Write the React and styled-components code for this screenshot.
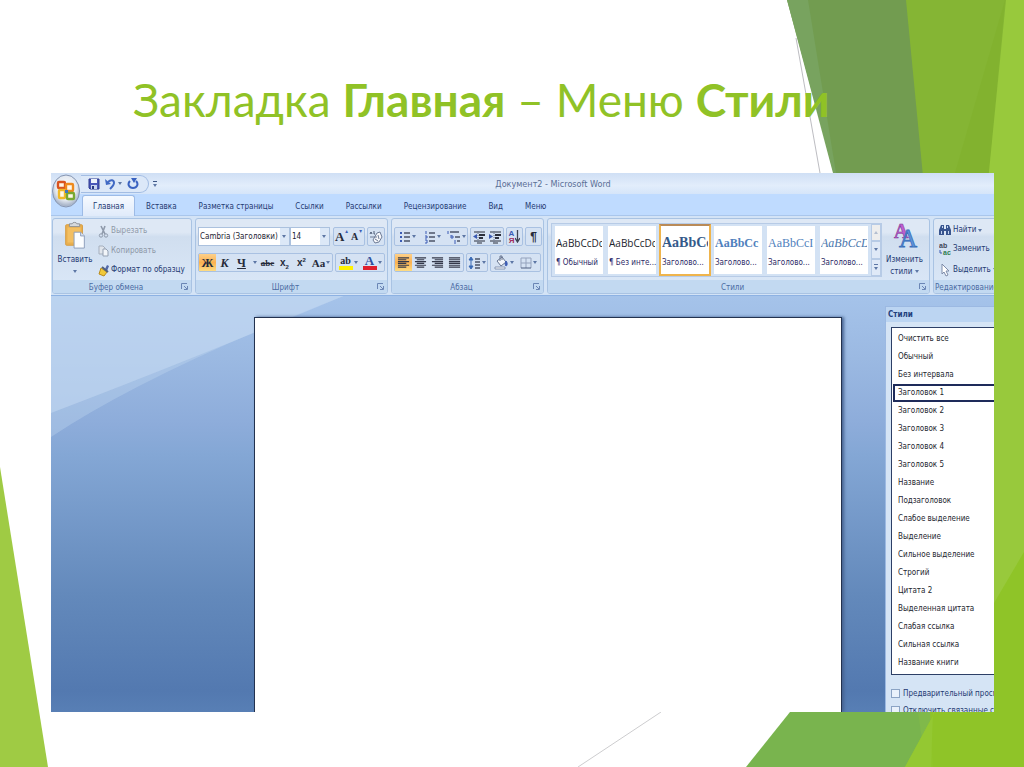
import React from 'react'
import styled, { createGlobalStyle, css } from 'styled-components';

const GlobalStyle = createGlobalStyle`
    *, *::before, *::after {
        box-sizing:border-box;
    }
    body {
        margin:0;
        background:white;
    }
    button, select, input {
        font:inherit;
        color:inherit;
    }
`;

const tabs = ['Главная', 'Вставка', 'Разметка страницы', 'Ссылки', 'Рассылки', 'Рецензирование', 'Вид', 'Меню'];

const gallery = [
    { sample: 'AaBbCcDc', name: '¶ Обычный', look: 'plain' },
    { sample: 'AaBbCcDc', name: '¶ Без инте...', look: 'plain' },
    { sample: 'AaBbCc', name: 'Заголово...', look: 'h1', active: true },
    { sample: 'AaBbCc', name: 'Заголово...', look: 'h2' },
    { sample: 'AaBbCcI', name: 'Заголово...', look: 'h3' },
    { sample: 'AaBbCcD', name: 'Заголово...', look: 'h4' },
];

const styleNames = [
    'Очистить все', 'Обычный', 'Без интервала', 'Заголовок 1', 'Заголовок 2', 'Заголовок 3',
    'Заголовок 4', 'Заголовок 5', 'Название', 'Подзаголовок', 'Слабое выделение', 'Выделение',
    'Сильное выделение', 'Строгий', 'Цитата 2', 'Выделенная цитата', 'Слабая ссылка',
    'Сильная ссылка', 'Название книги',
];

/* ---------- icons ---------- */

const Caret = () => (
    <CaretSvg width="4" height="3" viewBox="0 0 4 3"><path d="M0 0h4L2 3z" fill="#5d77a5" /></CaretSvg>
)

const Icon = ({ w = 14, h = 14, box, children }) => (
    <svg width={w} height={h} viewBox={box || `0 0 ${w} ${h}`} fill="none" aria-hidden="true">{children}</svg>
)

const SaveIcon = () => (
    <Icon w={12} h={12}>
        <path d="M1 1h10v10H2L1 10z" fill="#4a56b8" stroke="#2f3b90" />
        <path d="M3 1h6v4H3z" fill="#eef2fb" />
        <path d="M3 7h6v4H3z" fill="#c9d3ee" />
        <path d="M4 8h2v3H4z" fill="#27367f" />
    </Icon>
)

const UndoIcon = () => (
    <Icon w={11} h={12}>
        <path d="M3 4c3-3 6-2 6 1 0 2-2 4-4 6" stroke="#4069c4" strokeWidth="2" />
        <path d="M0 1l1 6 5-1z" fill="#4069c4" />
    </Icon>
)

const RedoIcon = () => (
    <Icon w={12} h={12}>
        <path d="M3 3C0 6 2 10 6 10s6-4 3-7" stroke="#3a62c0" strokeWidth="2" />
        <path d="M4 0h6L7 5z" fill="#3a62c0" />
    </Icon>
)

const OrbIcon = () => (
    <svg width="30" height="34" viewBox="0 0 30 34" aria-hidden="true">
        <defs>
            <radialGradient id="orb" cx="50%" cy="40%" r="65%">
                <stop offset="0" stopColor="#ffffff" />
                <stop offset="0.6" stopColor="#e3e8f0" />
                <stop offset="0.85" stopColor="#a9b5c9" />
                <stop offset="1" stopColor="#eef3fa" />
            </radialGradient>
        </defs>
        <ellipse cx="15" cy="17" rx="13.500" ry="16" fill="url(#orb)" stroke="#8595b2" />
        <g fill="#fff8e8" strokeWidth="2.400">
            <rect x="7" y="8" width="7" height="6" rx="1" stroke="#d9531e" />
            <rect x="15" y="10" width="7" height="7" rx="1" stroke="#ee8a1d" />
            <rect x="8" y="16" width="6" height="8" rx="1" stroke="#f0b92a" />
            <rect x="16" y="19" width="7" height="6" rx="1" stroke="#79a832" />
            <path d="M14 16h3v3h-3z" fill="#3f78c4" />
        </g>
    </svg>
)

const PasteIcon = () => (
    <Icon w={24} h={28} box="0 0 24 30">
        <rect x="2" y="4" width="18" height="22" rx="1" fill="#eab04f" stroke="#d59a3e" />
        <path d="M4 7h14v16H4z" fill="#f3bf62" />
        <path d="M6 6V3h3c0-2 5-2 5 0h3v3z" fill="#d5d9de" stroke="#8a8f98" />
        <path d="M11 12h7l4 4v13H11z" fill="#fbfdff" stroke="#8a9cba" />
        <path d="M18 12v4h4" stroke="#8a9cba" fill="#dbe5f4" />
    </Icon>
)

const CutIcon = () => (
    <Icon w={11} h={13}>
        <path d="M3 1l4 8M7 1L4 9" stroke="#8f9aab" strokeWidth="1.600" />
        <circle cx="3" cy="10.500" r="1.700" stroke="#8f9aab" />
        <circle cx="8" cy="10.500" r="1.700" stroke="#8f9aab" />
    </Icon>
)

const CopyIcon = () => (
    <Icon w={11} h={12}>
        <path d="M1 1h4l2 2v6H1z" fill="#e0e5ec" stroke="#a5afbd" />
        <path d="M5 4h3l2 2v5H5z" fill="#f2f5f9" stroke="#95a1b3" />
    </Icon>
)

const BrushIcon = () => (
    <Icon w={11} h={13}>
        <path d="M7 5l2-4 2 1-2 5z" fill="#5268a8" />
        <path d="M3 4l6 4-3 4-5-2z" fill="#f0c93a" stroke="#b98a1b" />
        <path d="M4 3l6 5" stroke="#52617e" strokeWidth="2" />
    </Icon>
)

const EraserIcon = () => (
    <Icon>
        <path d="M1 4l1-2 1 2M5 1v3h1" stroke="#4c5a75" />
        <path d="M8 3l3-1 2 5-3 5-4 1-2-3z" fill="#f6f7fb" stroke="#6d7b95" />
        <path d="M1 7h7M9 5l1 4M6 9l3 2" stroke="#6d7b95" />
    </Icon>
)

const BulletsIcon = () => (
    <Icon w={12}>
        <path d="M1 3h2M1 7h2M1 11h2" stroke="#3b5bb4" strokeWidth="2" />
        <path d="M5 3h6M5 7h6M5 11h6" stroke="#4c5468" strokeWidth="1.300" />
    </Icon>
)

const NumbersIcon = () => (
    <Icon w={12}>
        <path d="M2 1v3M1 6h2v2H1M1 10h2v3H1" stroke="#3b5bb4" />
        <path d="M5 3h6M5 7h6M5 11h6" stroke="#4c5468" strokeWidth="1.300" />
    </Icon>
)

const LevelsIcon = () => (
    <Icon>
        <path d="M1 1v3M4 5v3h2V6H4M8 10v4" stroke="#3b5bb4" />
        <path d="M3 2h9M8 7h5M10 11h3" stroke="#4c5468" strokeWidth="1.300" />
    </Icon>
)

const IndentIcon = ({ out }) => (
    <Icon>
        <path d="M2 2h11M2 11h11M5 13h5" stroke="#2c303d" />
        <path d="M7 5h6M7 8h4" stroke="#2c303d" strokeWidth="2" />
        {out ? <path d="M5 4v5L1 6.500z" fill="#3b5bb4" /> : <path d="M1 4v5l4-2.500z" fill="#3b5bb4" />}
        <path d="M6 1v12" stroke="#6b768f" strokeDasharray="1 1" />
    </Icon>
)

const SortArrow = () => (
    <Icon w={5} h={13}><path d="M2.500 0v11M0 8l2.500 4L5 8" stroke="#3d4353" strokeWidth="1.300" /></Icon>
)

const alignRows = {
    left: 'M1 2h12M1 4h9M1 6h12M1 8h9M1 10h12M1 12h9',
    center: 'M1 2h12M3 4h8M1 6h12M3 8h8M1 10h12M3 12h8',
    right: 'M1 2h12M4 4h9M1 6h12M4 8h9M1 10h12M4 12h9',
    justify: 'M1 2h12M1 4h12M1 6h12M1 8h12M1 10h12M1 12h12',
};

const AlignIcon = ({ side }) => (
    <Icon w={13} h={13} box="0 0 14 14"><path d={alignRows[side]} stroke="#34384a" strokeWidth="1.200" /></Icon>
)

const SpacingIcon = () => (
    <Icon w={13}>
        <path d="M3 3v8M1 4l2-3 2 3zM1 10l2 3 2-3z" stroke="#3b6bb4" fill="#3b6bb4" />
        <path d="M7 3h5M7 6h5M7 9h5M7 12h5" stroke="#4c5468" strokeWidth="1.300" />
    </Icon>
)

const BucketIcon = () => (
    <Icon w={15} h={15}>
        <path d="M3 6l5-4 4 5-5 4z" fill="#f3f6fb" stroke="#66748f" />
        <path d="M6 6V1h2v4" stroke="#66748f" />
        <path d="M12 6c2 2 1 5 0 5s-1-3 0-5z" fill="#3b5bb4" stroke="#3b5bb4" />
        <path d="M1 12h10v2H1z" fill="#ffffff" stroke="#8595b2" />
    </Icon>
)

const BordersIcon = () => (
    <Icon w={12} h={12}>
        <path d="M1 1h10v10M1 1v10M6 1v10M1 6h10" stroke="#95a3bd" />
        <path d="M1 11h10" stroke="#4f5f80" />
    </Icon>
)

const FindIcon = () => (
    <Icon w={12} h={12}>
        <path d="M0 11V6l2-5h3v10zM7 11V1h3l2 5v5z" fill="#39558f" />
        <path d="M5 5h2v2H5z" fill="#39558f" />
        <path d="M2 7h1v3H2zM9 7h1v3H9zM3 2h1v2H3zM8 2h1v2H8z" fill="#c4d5f0" />
    </Icon>
)

const PointerIcon = () => (
    <Icon w={12} h={14}>
        <path d="M3 1v10l2-2 2 4 2-1-2-4h3z" fill="#ffffff" stroke="#7d8ba8" />
    </Icon>
)

const ReplaceIcon = () => (
    <svg width="12" height="14" viewBox="0 0 12 14" aria-hidden="true">
        <text x="0" y="6" fontSize="7" fontWeight="700" fontFamily="Liberation Sans, sans-serif" fill="#3f4658">ab</text>
        <text x="4" y="13" fontSize="7" fontWeight="700" fontFamily="Liberation Sans, sans-serif" fill="#2e7d4f">ac</text>
        <path d="M1 8v3h2" fill="none" stroke="#3b5bb4" />
    </svg>
)

const BigStylesIcon = () => (
    <svg width="26" height="28" viewBox="0 0 26 28" aria-hidden="true">
        <text x="2" y="17" fontSize="20" fontWeight="700" fontFamily="Liberation Serif, serif" fill="#c05fd0" stroke="#7a3391" strokeWidth="0.500">A</text>
        <text x="7" y="26" fontSize="25" fontFamily="Liberation Serif, serif" fill="#5f95dc" stroke="#3b6fba" strokeWidth="0.800">A</text>
    </svg>
)

const Launcher = () => (
    <Launch aria-label="Параметры">
        <Icon w={7} h={7}><path d="M.5 6V.5H6M3 3l3 3M6.500 3v3.500H3" stroke="#6b86b5" /></Icon>
    </Launch>
)

const Backdrop = () => (
    <BackdropSvg viewBox="0 0 1024 767" preserveAspectRatio="none" aria-hidden="true">
        <path d="M796 38L820 173" stroke="#bdbdc2" />
        <path d="M661 712L578 767" stroke="#cdcdcf" />
        <path d="M787 0H1024V767H800L940 560z" fill="#729c50" />
        <path d="M787 0H808L836 173H833z" fill="#78a35f" />
        <path d="M906 0H1024V767H980z" fill="#85b534" />
        <path d="M1005 0L955 173L989 173z" fill="#82b22f" />
        <path d="M1006 0H1024V767H930z" fill="#98c93c" />
        <path d="M790 712L746 767H906L935 712z" fill="#79b44e" />
        <path d="M918 712L922 740L906 767H935V712z" fill="#80b94a" />
        <path d="M935 712L905 767H1024V700z" fill="#91c62c" />
        <path d="M1024 552L930 712L933 767H1024z" fill="#8fc428" />
        <path d="M935 712L905 767H931L933 712z" fill="#94c832" />
        <path d="M0 467V767H48z" fill="#9fcb44" />
    </BackdropSvg>
)

/* ---------- ribbon groups ---------- */

const ClipboardGroup = () => (
    <Group $width={140}>
        <GroupBody>
            <BigButton $width={40}>
                <PasteIcon />
                Вставить
                <Caret />
            </BigButton>
            <Stack>
                <Command disabled><CutIcon />Вырезать</Command>
                <Command disabled><CopyIcon />Копировать</Command>
                <Command><BrushIcon />Формат по образцу</Command>
            </Stack>
        </GroupBody>
        <GroupLabel>Буфер обмена<Launcher /></GroupLabel>
    </Group>
)

const FontGroup = () => (
    <Group $width={193}>
        <ToolRows>
            <Tools>
                <Combo $width={92}>
                    <select aria-label="Шрифт"><option>Cambria (Заголовки)</option></select>
                    <Caret />
                </Combo>
                <Combo $width={40}>
                    <select aria-label="Размер шрифта"><option>14</option></select>
                    <Caret />
                </Combo>
                <ToolSet $push>
                    <Tool $w={15} aria-label="Увеличить размер"><Letter $size={13}>A</Letter><sup>▴</sup></Tool>
                    <Tool $w={15} aria-label="Уменьшить размер"><Letter $size={10}>A</Letter><sup>▾</sup></Tool>
                </ToolSet>
                <ToolSet><Tool $w={16} aria-label="Очистить формат"><EraserIcon /></Tool></ToolSet>
            </Tools>
            <Tools>
                <ToolSet>
                    <Tool $w={17} $on><Letter>Ж</Letter></Tool>
                    <Tool $w={17}><Letter $italic>К</Letter></Tool>
                    <Tool $w={17}><Letter $line="underline">Ч</Letter></Tool>
                    <Tool $w={9} aria-label="Вид подчёркивания"><Caret /></Tool>
                    <Tool $w={17}><Letter $size={9} $line="line-through">abc</Letter></Tool>
                    <Tool $w={17}><Letter $size={10} $sans>x<sub>2</sub></Letter></Tool>
                    <Tool $w={17}><Letter $size={10} $sans>x<sup>2</sup></Letter></Tool>
                    <Tool $w={22}><Letter $size={11}>Aa</Letter><Caret /></Tool>
                </ToolSet>
                <ToolSet $push>
                    <Tool $w={24} aria-label="Цвет выделения"><Marked $bar="#fff200">ab</Marked><Caret /></Tool>
                    <Tool $w={24} aria-label="Цвет текста"><Marked $bar="#e0202c" $big>A</Marked><Caret /></Tool>
                </ToolSet>
            </Tools>
        </ToolRows>
        <GroupLabel>Шрифт<Launcher /></GroupLabel>
    </Group>
)

const ParagraphGroup = () => (
    <Group $width={153}>
        <ToolRows>
            <Tools>
                <ToolSet>
                    <Tool $w={25} aria-label="Маркеры"><BulletsIcon /><Caret /></Tool>
                    <Tool $w={25} aria-label="Нумерация"><NumbersIcon /><Caret /></Tool>
                    <Tool $w={22} aria-label="Многоуровневый список"><LevelsIcon /><Caret /></Tool>
                </ToolSet>
                <ToolSet>
                    <Tool $w={16} aria-label="Уменьшить отступ"><IndentIcon out /></Tool>
                    <Tool $w={16} aria-label="Увеличить отступ"><IndentIcon /></Tool>
                </ToolSet>
                <ToolSet>
                    <Tool $w={15} aria-label="Сортировка">
                        <SortLetters><span>А</span><span>Я</span></SortLetters><SortArrow />
                    </Tool>
                </ToolSet>
                <ToolSet $push><Tool $w={15} aria-label="Знаки"><Letter $size={12} $sans>¶</Letter></Tool></ToolSet>
            </Tools>
            <Tools>
                <ToolSet>
                    <Tool $w={17} $on aria-label="По левому краю"><AlignIcon side="left" /></Tool>
                    <Tool $w={17} aria-label="По центру"><AlignIcon side="center" /></Tool>
                    <Tool $w={17} aria-label="По правому краю"><AlignIcon side="right" /></Tool>
                    <Tool $w={17} aria-label="По ширине"><AlignIcon side="justify" /></Tool>
                </ToolSet>
                <ToolSet><Tool $w={20} aria-label="Интервал"><SpacingIcon /><Caret /></Tool></ToolSet>
                <ToolSet $push>
                    <Tool $w={25} aria-label="Заливка"><BucketIcon /><Caret /></Tool>
                    <Tool $w={24} aria-label="Границы"><BordersIcon /><Caret /></Tool>
                </ToolSet>
            </Tools>
        </ToolRows>
        <GroupLabel>Абзац<Launcher /></GroupLabel>
    </Group>
)

const StylesGroup = () => (
    <Group $width={383}>
        <GroupBody>
            <Gallery>
                {gallery.map((item, i) => (
                    <StyleCard key={i} $active={item.active}>
                        <Sample $look={item.look}>{item.sample}</Sample>
                        <CardName>{item.name}</CardName>
                    </StyleCard>
                ))}
                <GalleryScroll>
                    <button aria-label="Вверх"><Caret /></button>
                    <button aria-label="Вниз"><Caret /></button>
                    <button aria-label="Дополнительно"><i /><Caret /></button>
                </GalleryScroll>
            </Gallery>
            <BigButton $width={46}>
                <BigStylesIcon />
                Изменить
                <span>стили <Caret /></span>
            </BigButton>
        </GroupBody>
        <GroupLabel>Стили<Launcher /></GroupLabel>
    </Group>
)

const EditingGroup = () => (
    <Group $width={80}>
        <GroupBody>
            <Stack>
                <Command><FindIcon />Найти <Caret /></Command>
                <Command><ReplaceIcon />Заменить</Command>
                <Command><PointerIcon />Выделить <Caret /></Command>
            </Stack>
        </GroupBody>
        <GroupLabel $left>Редактирование</GroupLabel>
    </Group>
)

const StylesPanel = () => (
    <Panel>
        <PanelTitle>Стили</PanelTitle>
        <StyleList>
            {styleNames.map((name) => (
                <li key={name}><StyleOption $active={name === 'Заголовок 1'}>{name}</StyleOption></li>
            ))}
        </StyleList>
        <Check><input type="checkbox" />Предварительный просмотр</Check>
        <Check><input type="checkbox" />Отключить связанные стили</Check>
    </Panel>
)

const App = () => {
    return (
        <Slide>
            <GlobalStyle />
            <Backdrop />
            <Heading>Закладка <b>Главная</b> – Меню <b>Стили</b></Heading>
            <Word>
                <TitleBar>
                    <Orb aria-label="Office"><OrbIcon /></Orb>
                    <QuickAccess>
                        <button aria-label="Сохранить"><SaveIcon /></button>
                        <button aria-label="Отменить"><UndoIcon /><Caret /></button>
                        <button aria-label="Повторить"><RedoIcon /></button>
                    </QuickAccess>
                    <Customize aria-label="Настройка панели"><i /><Caret /></Customize>
                    <DocName>Документ2 - Microsoft Word</DocName>
                </TitleBar>
                <TabRow>
                    {tabs.map((tab, i) => <Tab key={tab} $active={i === 0}>{tab}</Tab>)}
                </TabRow>
                <Ribbon>
                    <ClipboardGroup />
                    <FontGroup />
                    <ParagraphGroup />
                    <StylesGroup />
                    <EditingGroup />
                </Ribbon>
                <Workspace>
                    <Swoosh viewBox="0 0 294 152" preserveAspectRatio="none" aria-hidden="true">
                        <path d="M0 0H294Q100 75 0 141z" fill="#c4dbf2" opacity="0.350" />
                        <path d="M0 0H294Q130 68 0 117z" fill="#c8dcf4" opacity="0.500" />
                    </Swoosh>
                    <Page />
                    <StylesPanel />
                </Workspace>
            </Word>
        </Slide>
    )
}

/* ---------- styles ---------- */

const uiFont = `'DejaVu Sans Condensed', 'Noto Sans', sans-serif`;

const bare = css`
    border:0;
    padding:0;
    margin:0;
    background:none;
`;

const Slide = styled.main`
    position:relative;
    z-index:0;
    display:flex;
    flex-direction:column;
    height:100vh;
    padding:0 30px 55px 51px;
    overflow:hidden;
`;

const BackdropSvg = styled.svg`
    position:absolute;
    inset:0;
    z-index:-1;
    width:100%;
    height:100%;
    fill:none;
`;

const CaretSvg = styled.svg`
    flex:none;
`;

const Heading = styled.h1`
    flex:none;
    height:173px;
    margin:0;
    padding:70px 0 0 82px;
    color:#90c226;
    font:400 46px/60px Lato, sans-serif;
    white-space:nowrap;
`;

const Word = styled.section`
    display:flex;
    flex:1;
    flex-direction:column;
    min-height:0;
    overflow:hidden;
    color:#1f3a72;
    background:#bfdbff;
    font:8px/12px ${uiFont};
`;

const TitleBar = styled.header`
    display:flex;
    flex:none;
    align-items:center;
    height:21px;
    background:linear-gradient(#cfdff5, #e2edfb 60%, #d5e5f9);
`;

const Orb = styled.button`
    ${bare}
    z-index:1;
    height:34px;
    margin-top:14px;
`;

const QuickAccess = styled.div`
    display:flex;
    align-items:center;
    gap:5px;
    width:68px;
    height:18px;
    padding-left:7px;
    border:1px solid #a3bde3;
    border-left:0;
    border-radius:0 9px 9px 0;
    background:#dce8f8;

    button {
        ${bare}
        display:flex;
        align-items:center;
        gap:2px;
    }
`;

const Customize = styled.button`
    ${bare}
    display:flex;
    flex-direction:column;
    gap:2px;
    margin-left:4px;

    i {
        width:4px;
        height:1px;
        background:#3d5685;
    }
`;

const DocName = styled.div`
    flex:1;
    padding-right:45px;
    color:#5a6f96;
    font-size:9px;
    text-align:center;
`;

const TabRow = styled.nav`
    display:flex;
    flex:none;
    height:22px;
    padding:1px 0 0 31px;
    border-bottom:1px solid #a9c6ec;
    background:#bfdbff;
`;

const Tab = styled.button`
    ${bare}
    height:22px;
    padding:0 10px;
    border:1px solid transparent;
    border-bottom:0;
    border-radius:3px 3px 0 0;
    white-space:nowrap;
    ${(props) => props.$active && css`
        border-color:#9dbbe6;
        background:linear-gradient(#f6faff, #dfeafa);
    `}
`;

const Ribbon = styled.div`
    display:flex;
    flex:none;
    gap:3px;
    height:80px;
    padding:2px 1px 1px;
    border-bottom:1px solid #8db2e3;
    background:#d3e3f6;
`;

const Group = styled.div`
    display:flex;
    flex:none;
    flex-direction:column;
    width:${(props) => props.$width}px;
    border:1px solid #a9c3e3;
    border-radius:3px;
    background:linear-gradient(#dee8f5 18%, #d0deef 24%, #dbe8f8);
    overflow:hidden;
`;

const GroupBody = styled.div`
    display:flex;
    flex:1;
    justify-content:space-between;
    padding:2px 2px 0;
`;

const GroupLabel = styled.div`
    position:relative;
    flex:none;
    height:13px;
    padding:0 12px 0 ${(props) => (props.$left ? 1 : 0)}px;
    color:#4a6ba3;
    background:#c2d9f1;
    line-height:15px;
    text-align:${(props) => (props.$left ? 'left' : 'center')};
    white-space:nowrap;
`;

const Launch = styled.button`
    ${bare}
    position:absolute;
    top:3px;
    right:3px;
    display:flex;
`;

const BigButton = styled.button`
    ${bare}
    display:flex;
    flex-direction:column;
    align-items:center;
    width:${(props) => props.$width}px;
    line-height:12px;
    white-space:nowrap;

    & > svg:first-child {
        margin-bottom:5px;
    }
    & > svg:last-child {
        margin-top:4px;
    }
    span svg {
        vertical-align:middle;
    }
`;

const Stack = styled.div`
    display:flex;
    flex:1;
    flex-direction:column;
    justify-content:space-around;
    padding-left:3px;
`;

const Command = styled.button`
    ${bare}
    display:flex;
    align-items:center;
    gap:2px;
    color:${(props) => (props.disabled ? '#8e98a8' : '#1f3a72')};
    white-space:nowrap;

    svg {
        flex:none;
    }
`;

const ToolRows = styled.div`
    display:flex;
    flex:1;
    flex-direction:column;
    gap:7px;
    padding:8px 2px 0;
`;

const Tools = styled.div`
    display:flex;
    gap:2px;
    height:19px;
`;

const ToolSet = styled.div`
    display:flex;
    margin-left:${(props) => (props.$push ? 'auto' : '0')};
    border:1px solid #a9c1e2;
    border-radius:2px;
    background:#d5e2f3;
`;

const Tool = styled.button`
    ${bare}
    display:flex;
    align-items:center;
    justify-content:center;
    gap:1px;
    width:${(props) => props.$w}px;
    background:${(props) => (props.$on ? 'linear-gradient(#fdd08a, #fbb252 50%, #fddc84)' : 'none')};
    color:#262b3a;

    sup, sub {
        font-size:6px;
        line-height:6px;
    }
    & > sup {
        align-self:flex-start;
        color:#3b5bb4;
    }
`;

const Letter = styled.span`
    font:${(props) => (props.$italic ? 'italic' : 'normal')} 700 ${(props) => props.$size || 12}px/14px
        ${(props) => (props.$sans ? `'Liberation Sans', sans-serif` : `'Liberation Serif', serif`)};
    text-decoration:${(props) => props.$line || 'none'};
`;

const Marked = styled.span`
    width:14px;
    border-bottom:4px solid ${(props) => props.$bar};
    color:${(props) => (props.$big ? '#2f4f9c' : '#262b3a')};
    font:700 ${(props) => (props.$big ? 13 : 10)}px/11px 'Liberation Serif', serif;
    text-align:center;
`;

const SortLetters = styled.span`
    display:flex;
    flex-direction:column;
    color:#3b5bb4;
    font:700 8px/7px 'Liberation Sans', sans-serif;

    span + span {
        color:#a03060;
    }
`;

const Combo = styled.label`
    display:flex;
    align-items:center;
    width:${(props) => props.$width}px;
    margin-right:-2px;
    padding-right:3px;
    border:1px solid #abc1de;
    background:linear-gradient(to left, #dce8f7 9px, white 9px);

    select {
        ${bare}
        flex:1;
        min-width:0;
        padding-left:1px;
        color:#1d2433;
        appearance:none;
    }
`;

const Gallery = styled.div`
    display:flex;
    gap:1px;
    height:54px;
    margin:2px 0 0 1px;
    padding-left:1px;
    border:1px solid #b7cbe6;
    background:#d3e2f4;
`;

const StyleCard = styled.button`
    ${bare}
    display:flex;
    flex-direction:column;
    width:52px;
    margin:0;
    padding:9px 1px 0;
    border:2px solid ${(props) => (props.$active ? '#efb44c' : '#d3e2f4')};
    border-top-color:${(props) => (props.$active ? '#b98a58' : '#d3e2f4')};
    background:white;
    text-align:left;
    white-space:nowrap;
`;

const looks = {
    plain: css`color:#22252d; font:400 10px/16px 'Open Sans', sans-serif;`,
    h1: css`color:#345a8a; font:700 14px/16px 'Liberation Serif', serif;`,
    h2: css`color:#4f81bd; font:700 12px/16px 'Liberation Serif', serif;`,
    h3: css`color:#4f81bd; font:400 12px/16px 'Liberation Serif', serif;`,
    h4: css`color:#4a76ad; font:italic 400 12px/16px 'Liberation Serif', serif;`,
};

const Sample = styled.span`
    width:100%;
    overflow:hidden;
    ${(props) => looks[props.$look]}
`;

const CardName = styled.span`
    margin-top:6px;
    color:#2c2a66;
`;

const GalleryScroll = styled.div`
    display:flex;
    flex-direction:column;

    button {
        ${bare}
        display:flex;
        flex:1;
        flex-direction:column;
        align-items:center;
        justify-content:center;
        gap:2px;
        width:10px;
        border:1px solid #b7cbe6;
        background:#dfe9f7;
    }
    button:first-child {
        background:#eeeeee;
    }
    button:first-child svg {
        transform:rotate(180deg);
        opacity:0.4;
    }
    i {
        width:4px;
        height:1px;
        background:#5d77a5;
    }
`;

const Workspace = styled.div`
    position:relative;
    z-index:0;
    display:grid;
    flex:1;
    grid-template-columns:203fr 588fr 43fr 109px;
    min-height:0;
    background:linear-gradient(#a5c3ea, #9bb9e2 15%, #8dacda 31%, #84a7d5 38%, #6389bb 72%, #5379b0 95%, #587fb5);
    overflow:hidden;
`;

const Swoosh = styled.svg`
    position:absolute;
    inset:0 auto auto 0;
    z-index:-1;
    width:31%;
    height:152px;
`;

const Page = styled.article`
    grid-column:2;
    margin-top:21px;
    border:1px solid #23324f;
    border-bottom:0;
    background:white;
    box-shadow:2px 0 3px #46628f;
`;

const Panel = styled.aside`
    grid-column:4;
    margin-top:10px;
    border:1px solid #9cb9e2;
    border-width:1px 0 0 1px;
    background:#d5e4f5;
    overflow:hidden;
    white-space:nowrap;
`;

const PanelTitle = styled.h2`
    margin:0 0 5px;
    padding:1px 0 1px 2px;
    color:#1f3f7d;
    background:#bcd5f2;
    font:700 8px/13px ${uiFont};
`;

const StyleList = styled.ul`
    margin:0 0 10px 5px;
    padding:2px 0 2px 1px;
    border:1px solid #2d3f66;
    border-right:0;
    background:white;
    list-style:none;
`;

const StyleOption = styled.button`
    ${bare}
    display:block;
    width:100%;
    height:18px;
    padding-left:${(props) => (props.$active ? 3 : 5)}px;
    border:${(props) => (props.$active ? '2px solid #1e2b5a' : '0')};
    border-right:0;
    color:#23262e;
    line-height:14px;
    text-align:left;
`;

const Check = styled.label`
    display:flex;
    align-items:center;
    gap:3px;
    height:17px;
    padding-left:5px;

    input {
        flex:none;
        width:9px;
        height:9px;
        margin:0;
        border:1px solid #8ba3c4;
        background:#e9f1fb;
        appearance:none;
    }
`;

export default App
